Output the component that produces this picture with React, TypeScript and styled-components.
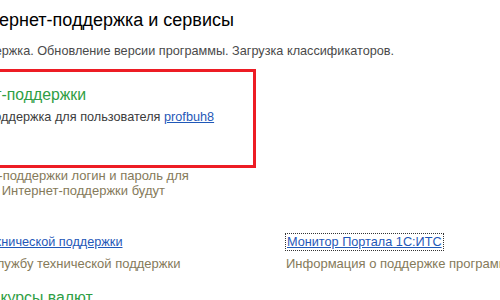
import React from "react";
import styled, { createGlobalStyle } from "styled-components";

const GlobalStyle = createGlobalStyle`
    html, body {
        margin: 0;
        padding: 0;
        background: #ffffff;
    }
    body {
        font-family: "Liberation Sans", Arial, sans-serif;
    }
`;

const Viewport = styled.div`
    width: 500px;
    height: 300px;
    overflow: hidden;
    background: #ffffff;
`;

// the panel is scrolled to the right, so its left part lies outside the window
const Canvas = styled.div`
    width: 900px;
    margin-left: -200px;
`;

const Header = styled.div`
    padding-top: 9px;
`;

const Title = styled.div`
    padding-left: 168px;
    font-size: 18px;
    line-height: 22px;
    color: #000000;
    white-space: nowrap;
`;

const Subtitle = styled.div`
    margin-top: 12px;
    padding-left: 164px;
    font-size: 12.7px;
    line-height: 16px;
    color: #4a4a4a;
    white-space: nowrap;
`;

const Frame = styled.div`
    margin: 10px 0 0 10px;
    width: 428px;
    border: 3px solid #ed1c24;
    padding: 14px 0 40px 12px;
`;

const GroupTitle = styled.div<{ $indent?: number }>`
    padding-left: ${(p) => p.$indent ?? 0}px;
    font-size: 15.8px;
    line-height: 18px;
    color: #2f9e44;
    white-space: nowrap;
`;

const Line = styled.div<{ $indent?: number }>`
    margin-top: 5px;
    padding-left: ${(p) => p.$indent ?? 0}px;
    font-size: 12.7px;
    line-height: 16px;
    color: #3c3c3c;
    white-space: nowrap;
`;

const Link = styled.a`
    color: #1f58b8;
    text-decoration: underline;
    cursor: pointer;
`;

const Note = styled.div<{ $indent: number }>`
    padding-left: ${(p) => p.$indent}px;
    font-size: 13px;
    line-height: 15px;
    color: #857a5a;
    white-space: nowrap;
`;

const Services = styled.div`
    display: grid;
    grid-template-columns: 486px 1fr;
    margin-top: 34px;
`;

const Service = styled.div<{ $indent: number }>`
    padding-left: ${(p) => p.$indent}px;
    white-space: nowrap;
`;

const ServiceLink = styled.a<{ $focused?: boolean; $offset?: number }>`
    display: inline-block;
    margin-left: ${(p) => p.$offset ?? 0}px;
    font-size: 12.7px;
    line-height: 16px;
    color: #1f58b8;
    text-decoration: underline;
    padding: 0 1px;
    outline: ${(p) => (p.$focused ? "1px dotted #333333" : "none")};
    cursor: pointer;
`;

const ServiceText = styled.div`
    margin-top: 6px;
    font-size: 13px;
    line-height: 16px;
    color: #857a5a;
`;

const Section = styled.div<{ $indent: number }>`
    margin-top: 17px;
    padding-left: ${(p) => p.$indent}px;
    font-size: 15.8px;
    line-height: 18px;
    color: #2f9e44;
    white-space: nowrap;
`;

export default function App() {
    return (
        <>
            <GlobalStyle />
            <Viewport>
                <Canvas>
                    <Header>
                        <Title>Интернет-поддержка и сервисы</Title>
                        <Subtitle>
                            Поддержка. Обновление версии программы. Загрузка классификаторов.
                        </Subtitle>
                    </Header>
                    <Frame>
                        <GroupTitle $indent={3}>Подключение Интернет-поддержки</GroupTitle>
                        <Line $indent={26}>
                            Подключена Интернет-поддержка для пользователя <Link>profbuh8</Link>
                        </Line>
                    </Frame>
                    <Note $indent={31}>Для подключения Интернет-поддержки логин и пароль для</Note>
                    <Note $indent={48}>использования сервисов Интернет-поддержки будут</Note>
                    <Services>
                        <Service $indent={40}>
                            <ServiceLink $offset={13}>Сообщение в службу технической поддержки</ServiceLink>
                            <ServiceText>Отправить сообщение в службу технической поддержки</ServiceText>
                        </Service>
                        <Service $indent={0}>
                            <ServiceLink $focused>Монитор Портала 1С:ИТС</ServiceLink>
                            <ServiceText>Информация о поддержке программы на Портале 1С:ИТС</ServiceText>
                        </Service>
                    </Services>
                    <Section $indent={124}>Загрузить курсы валют</Section>
                </Canvas>
            </Viewport>
        </>
    );
}
